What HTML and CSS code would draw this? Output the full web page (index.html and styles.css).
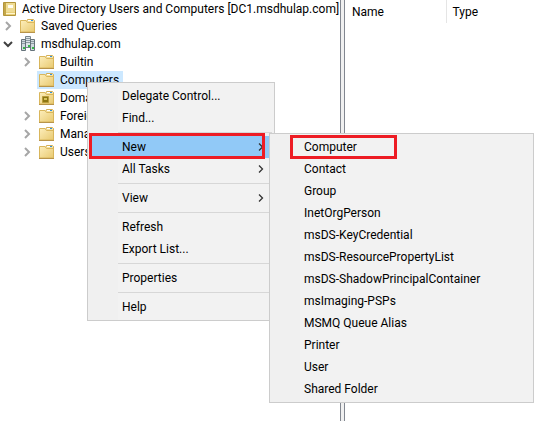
FILE: index.html
```html
<!DOCTYPE html>
<html lang="en">
<head>
    <meta charset="UTF-8">
    <title>Active Directory Users and Computers</title>
    <link rel="stylesheet" href="styles.css">
</head>
<body>
    <!-- shared icons -->
    <svg class="sprite" aria-hidden="true">
        <defs>
            <linearGradient id="folder-fill" x1="0" y1="0" x2="1" y2="1">
                <stop offset="0" stop-color="#fdeebb"/>
                <stop offset="1" stop-color="#e8c970"/>
            </linearGradient>
        </defs>
        <symbol id="folder" viewBox="0 0 16 16">
            <path d="M6.500 3.500l1-2h6l1 1v3h-8z" fill="#f7e3a0" stroke="#d3ae55"/>
            <path d="M8 2.500h5" stroke="#fff"/>
            <path d="M11 2.500h2" stroke="#2f8fe0"/>
            <path d="M.5 2.500h5.500l1.500 2h7v9.500h-14z" fill="url(#folder-fill)" stroke="#d9b65c"/>
            <path d="M0 14.500h15" stroke="#b8944a"/>
        </symbol>
        <symbol id="ou" viewBox="0 0 16 16">
            <use href="#folder"/>
            <path d="M3.500 6.500h6v6h-6z" fill="#8d7614" stroke="#b99c3a"/>
            <path d="M5 8h3v2h-3z" fill="#d9c45a"/>
        </symbol>
        <symbol id="closed" viewBox="0 0 8 10">
            <path d="M2 1l4 4-4 4" fill="none" stroke="#a6a6a6" stroke-width="2"/>
        </symbol>
        <symbol id="open" viewBox="0 0 10 8">
            <path d="M1 2l4 4 4-4" fill="none" stroke="#404040" stroke-width="2"/>
        </symbol>
        <symbol id="arrow" viewBox="0 0 6 8">
            <path d="M1 0.500l3.500 3.500-3.500 3.500" fill="none" stroke="#333" stroke-width="1.300"/>
        </symbol>
    </svg>

    <div class="console">
        <div class="tree-pane">
            <div class="row root">
                <span class="label">
                    <svg class="icon" viewBox="0 0 16 16">
                        <path d="M2.500 1.500h12v13h-12z" fill="#e9d07a" stroke="#b3953a"/>
                        <path d="M3 2h2v12h-2z" fill="#c4a748"/>
                        <path d="M5 2h9v9h-9z" fill="#efdc94"/>
                        <path d="M7 4h5v3h-5z" fill="#fffdf0"/>
                        <path d="M5 12.500h9" stroke="#fff6ce"/>
                    </svg>
                    Active Directory Users and Computers [DC1.msdhulap.com]
                </span>
            </div>
            <ul class="tree">
                <li>
                    <div class="row">
                        <span class="expander"><svg width="8" height="10"><use href="#closed"/></svg></span>
                        <span class="label"><svg class="icon"><use href="#folder"/></svg>Saved Queries</span>
                    </div>
                </li>
                <li>
                    <div class="row">
                        <span class="expander"><svg width="10" height="8"><use href="#open"/></svg></span>
                        <span class="label">
                            <svg class="icon" viewBox="0 0 16 16">
                                <path d="M5.500 .5h5v11h-5z" fill="#dce4e8" stroke="#77848c"/>
                                <path d="M1.500 3.500h4v11h-4z" fill="#cfd9de" stroke="#65727a"/>
                                <path d="M10.500 3.500h4v11h-4z" fill="#cfd9de" stroke="#65727a"/>
                                <path d="M6 2.500h4M6 4.500h4M6 6.500h4M2 5.500h3M2 7.500h3M11 5.500h3M11 7.500h3" stroke="#8c9aa2"/>
                                <path d="M3 11h2v2h-2zM12 11h2v2h-2zM8 9h2v2h-2z" fill="#35b845"/>
                            </svg>
                            msdhulap.com
                        </span>
                    </div>
                    <ul class="tree">
                        <li class="row">
                            <span class="expander"><svg width="8" height="10"><use href="#closed"/></svg></span>
                            <span class="label"><svg class="icon"><use href="#folder"/></svg>Builtin</span>
                        </li>
                        <li class="row">
                            <span class="expander"></span>
                            <span class="label selected"><svg class="icon"><use href="#folder"/></svg>Computers</span>
                        </li>
                        <li class="row">
                            <span class="expander"></span>
                            <span class="label"><svg class="icon"><use href="#ou"/></svg>Doma</span>
                        </li>
                        <li class="row">
                            <span class="expander"><svg width="8" height="10"><use href="#closed"/></svg></span>
                            <span class="label"><svg class="icon"><use href="#folder"/></svg>Foreig</span>
                        </li>
                        <li class="row">
                            <span class="expander"><svg width="8" height="10"><use href="#closed"/></svg></span>
                            <span class="label"><svg class="icon"><use href="#folder"/></svg>Mana</span>
                        </li>
                        <li class="row">
                            <span class="expander"><svg width="8" height="10"><use href="#closed"/></svg></span>
                            <span class="label"><svg class="icon"><use href="#folder"/></svg>Users</span>
                        </li>
                    </ul>
                </li>
            </ul>
        </div>
        <div class="splitter"></div>
        <div class="list-pane">
            <table class="list">
                <thead>
                    <tr><th class="name">Name</th><th>Type</th></tr>
                </thead>
            </table>
        </div>
    </div>

    <!-- context menu -->
    <ul class="menu context">
        <li><button type="button">Delegate Control...</button></li>
        <li><button type="button">Find...</button></li>
        <li class="separator"></li>
        <li class="active">
            <button type="button">New<svg class="arrow"><use href="#arrow"/></svg></button>
            <ul class="menu submenu">
                <li><button type="button">Computer</button><span class="mark mark-computer"></span></li>
                <li><button type="button">Contact</button></li>
                <li><button type="button">Group</button></li>
                <li><button type="button">InetOrgPerson</button></li>
                <li><button type="button">msDS-KeyCredential</button></li>
                <li><button type="button">msDS-ResourcePropertyList</button></li>
                <li><button type="button">msDS-ShadowPrincipalContainer</button></li>
                <li><button type="button">msImaging-PSPs</button></li>
                <li><button type="button">MSMQ Queue Alias</button></li>
                <li><button type="button">Printer</button></li>
                <li><button type="button">User</button></li>
                <li><button type="button">Shared Folder</button></li>
            </ul>
            <span class="mark mark-new"></span>
        </li>
        <li><button type="button">All Tasks<svg class="arrow"><use href="#arrow"/></svg></button></li>
        <li class="separator"></li>
        <li><button type="button">View<svg class="arrow"><use href="#arrow"/></svg></button></li>
        <li class="separator"></li>
        <li><button type="button">Refresh</button></li>
        <li><button type="button">Export List...</button></li>
        <li class="separator"></li>
        <li><button type="button">Properties</button></li>
        <li class="separator"></li>
        <li><button type="button">Help</button></li>
    </ul>
</body>
</html>
```
FILE: styles.css
```css
* {
    box-sizing: border-box;
}
body {
    margin: 0;
    background-color: #fff;
    color: #000;
    font: 12px/18px "Segoe UI", Roboto, "Open Sans", sans-serif;
    overflow: hidden;
}
ul {
    list-style: none;
    margin: 0;
    padding: 0;
}
.sprite {
    position: absolute;
    width: 0;
    height: 0;
}
.console {
    display: flex;
    min-height: 100vh;
}

/* tree */
.tree-pane {
    flex: 0 0 340px;
    white-space: nowrap;
    overflow: hidden;
}
.tree .tree {
    padding-left: 19px;
}
.row {
    display: flex;
    height: 18px;
}
.root {
    height: 17px;
}
.root .label {
    height: 17px;
    padding-left: 1px;
}
.expander {
    display: flex;
    align-items: center;
    justify-content: center;
    width: 18px;
    padding-right: 2px;
}
.label {
    display: flex;
    align-items: center;
    gap: 5px;
    height: 18px;
    padding: 0 4px 0 2px;
}
.selected {
    background-color: #cce8ff;
}
.icon {
    width: 16px;
    height: 16px;
}
.splitter {
    flex: 0 0 5px;
    background-color: #f0f0f0;
    border: solid #828790;
    border-width: 0 1px;
}

/* list */
.list-pane {
    flex: 1;
}
.list {
    width: 100%;
    border-collapse: collapse;
    table-layout: fixed;
}
.list th {
    height: 23px;
    padding: 0 6px;
    font-weight: normal;
    text-align: left;
}
.list .name {
    width: 101px;
    padding-left: 7px;
    border-right: 1px solid #e5e5e5;
}

/* menus */
.menu {
    position: absolute;
    padding: 2px;
    border: 1px solid #ccc;
    background: linear-gradient(to right, #f0f0f0 30px, #f2f2f2 30px);
}
.context {
    left: 87px;
    top: 82px;
    width: 188px;
}
.submenu {
    left: calc(100% - 3px);
    top: -3px;
    width: 265px;
}
.menu li {
    position: relative;
}
.menu button {
    display: flex;
    align-items: center;
    justify-content: space-between;
    width: 100%;
    height: 22px;
    padding: 0 8px 0 32px;
    border: 0;
    background: none;
    color: inherit;
    font: inherit;
    text-align: left;
    white-space: nowrap;
}
.menu .active {
    z-index: 1;
}
.active > button {
    background-color: #91c9f7;
}
.separator {
    height: 7px;
    padding: 3px 0 3px 28px;
}
.separator::before {
    content: "";
    display: block;
    height: 1px;
    background-color: #d7d7d7;
}
.arrow {
    width: 6px;
    height: 8px;
}

/* red frames */
.mark {
    position: absolute;
    border: 3px solid #ed1c24;
    pointer-events: none;
}
.mark-new {
    left: -1px;
    top: -3px;
    width: 176px;
    height: 26px;
}
.mark-computer {
    left: 18px;
    top: -1px;
    width: 107px;
    height: 24px;
}
```
